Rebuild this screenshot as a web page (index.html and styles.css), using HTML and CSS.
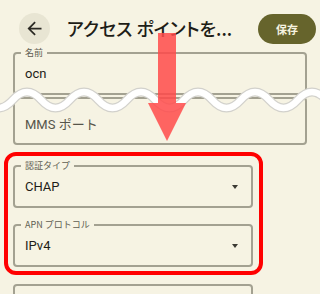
FILE: index.html
```html
<!DOCTYPE html>
<html lang="ja">

<head>
    <meta charset="UTF-8">
    <meta name="viewport" content="width=device-width, initial-scale=1.0">
    <title>アクセス ポイントを編集</title>
    <link rel="stylesheet" href="styles.css">
</head>

<body>
    <div class="page">
        <header class="topbar">
            <button class="back-btn" aria-label="戻る">
                <svg width="21" height="21" viewBox="0 0 24 24">
                    <path d="M20 11H7.83l5.59-5.59L12 4l-8 8 8 8 1.41-1.41L7.83 13H20v-2z" fill="#2b2a24"/>
                </svg>
            </button>
            <h1 class="title">アクセス ポイントを...</h1>
            <button class="save-btn">保存</button>
        </header>

        <main class="form">
            <fieldset class="field wide">
                <legend>名前</legend>
                <div class="value">ocn</div>
            </fieldset>

            <fieldset class="field wide resting">
                <div class="value muted">MMS ポート</div>
            </fieldset>

            <div class="highlight">
                <fieldset class="field">
                    <legend>認証タイプ</legend>
                    <div class="value">CHAP<span class="caret"></span></div>
                </fieldset>
                <fieldset class="field second">
                    <legend>APN プロトコル</legend>
                    <div class="value">IPv4<span class="caret"></span></div>
                </fieldset>
            </div>

            <fieldset class="field next">
                <div class="value"></div>
            </fieldset>
        </main>

        <!-- cut mark and pointer drawn over the screenshot -->
        <svg class="overlay" width="320" height="294" viewBox="0 0 320 294">
            <path class="wave-edge" d="M-15.75 100 Q-1.5 116 12.75 100 T41.25 100 T69.75 100 T98.25 100 T126.75 100 T155.25 100 T183.75 100 T212.25 100 T240.75 100 T269.25 100 T297.75 100 T326.25 100 T354.75 100"/>
            <path class="wave" d="M-15.75 100 Q-1.5 116 12.75 100 T41.25 100 T69.75 100 T98.25 100 T126.75 100 T155.25 100 T183.75 100 T212.25 100 T240.75 100 T269.25 100 T297.75 100 T326.25 100 T354.75 100"/>
            <path class="pointer" d="M158 33 H176 V103 H186 L167 141 L148 103 H158 Z"/>
        </svg>
    </div>
</body>

</html>
```

FILE: styles.css
```css
html,
body {
    margin: 0;
    height: 100%;
    overflow: hidden;
}

body {
    background: #f6f3e3;
    font-family: Roboto, "Noto Sans CJK JP", sans-serif;
    color: #1e1d17;
}

.page {
    position: relative;
    width: 320px;
    height: 294px;
    overflow: hidden;
}

.topbar {
    display: flex;
    align-items: center;
    padding: 13px 4px 0 19px;
    height: 31px;
}

.back-btn {
    width: 31px;
    height: 31px;
    border: none;
    border-radius: 50%;
    background: #e8e5d3;
    padding: 0;
    display: flex;
    align-items: center;
    justify-content: center;
}

.title {
    flex: 1;
    margin: 0 0 0 17px;
    font-family: "Noto Sans CJK JP", sans-serif;
    font-size: 18px;
    font-weight: 500;
    line-height: 31px;
    font-feature-settings: "palt";
    white-space: nowrap;
    color: #1e1d17;
}

.save-btn {
    width: 58px;
    height: 30px;
    border: none;
    border-radius: 15px;
    background: #66642c;
    color: #f6f3e0;
    font-family: "Noto Sans CJK JP", sans-serif;
    font-size: 11px;
    font-weight: 700;
    padding: 0;
}

.form {
    padding-top: 3px;
}

.field {
    margin: 0;
    padding: 6px 10px 10px;
    border: 2px solid #a3a191;
    border-radius: 4px;
    min-width: 0;
    box-sizing: border-box;
    width: 240px;
}

.field legend {
    font-family: "Noto Sans CJK JP", sans-serif;
    font-size: 9px;
    line-height: 12px;
    padding: 0 4px;
    margin-left: -4px;
    color: #5f5e52;
}

.field.wide {
    width: 294px;
    margin-left: 13px;
}

.field.resting {
    margin-top: 2px;
    padding: 17px 10px 9px;
}

.value {
    display: flex;
    justify-content: space-between;
    align-items: center;
    font-size: 13px;
    line-height: 18px;
    height: 18px;
}

.value.muted {
    color: #56554a;
}

.caret {
    width: 0;
    height: 0;
    margin-right: 3px;
    border-left: 3.5px solid transparent;
    border-right: 3.5px solid transparent;
    border-top: 4px solid #3b3a33;
}

.highlight {
    margin: 7px 0 0 4px;
    width: 259px;
    box-sizing: border-box;
    padding: 4px 6px 4px 5px;
    border: 4px solid #ff0000;
    border-radius: 12px;
}

.field.second {
    margin-top: 11px;
}

.field.next {
    margin: 9px 0 0 13px;
    height: 60px;
}

.overlay {
    position: absolute;
    top: 0;
    left: 0;
    pointer-events: none;
}

.wave-edge {
    fill: none;
    stroke: #d2d1cc;
    stroke-width: 9;
}

.wave {
    fill: none;
    stroke: #ffffff;
    stroke-width: 6.5;
}

.pointer {
    fill: #ff4a4a;
    opacity: 0.85;
}
```
